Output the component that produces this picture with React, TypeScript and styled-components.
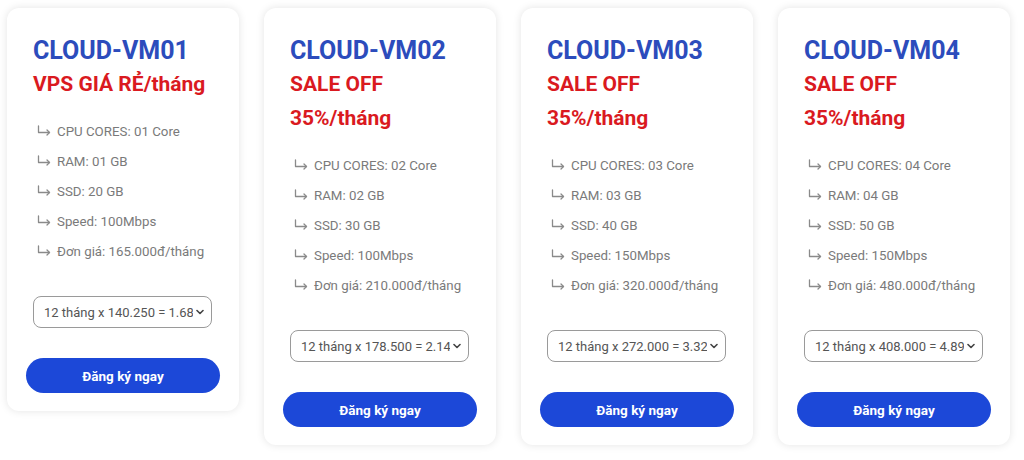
import React from "react";
import styled, { createGlobalStyle } from "styled-components";

const Global = createGlobalStyle`
  html, body { margin: 0; padding: 0; background: #ffffff; }
  body { font-family: Roboto, "Liberation Sans", Arial, sans-serif; }
  * { box-sizing: border-box; }
`;

const Row = styled.div`
  display: flex;
  align-items: flex-start;
  gap: 25px;
  padding: 8px 7px;
`;

const Card = styled.div`
  width: 232px;
  background: #ffffff;
  border-radius: 12px;
  box-shadow: 0 0 9px rgba(0, 0, 0, 0.11);
  padding: 26px 19px 18px;
  display: flex;
  flex-direction: column;
`;

const Heading = styled.div`
  padding-left: 7px;
`;

const Title = styled.div`
  font-size: 25px;
  font-weight: 700;
  line-height: 34px;
  color: #2c4cbc;
  white-space: nowrap;
`;

const Promo = styled.div`
  font-size: 21px;
  font-weight: 700;
  line-height: 34px;
  color: #da1a1f;
  white-space: nowrap;
  position: relative;
  top: -1px;
`;

const Features = styled.ul`
  list-style: none;
  margin: 14px 0 0;
  padding: 0 0 0 11px;
`;

const Feature = styled.li`
  display: flex;
  align-items: center;
  gap: 6px;
  height: 30px;
  font-size: 13.3px;
  color: #7a7a7a;
  white-space: nowrap;
`;

const Arrow = styled.svg`
  width: 14px;
  height: 11px;
  flex: none;
  margin-top: -2px;
`;

const SelectWrap = styled.div`
  position: relative;
  margin: 30px 0 0 7px;
  width: 179px;
  height: 32px;
`;

const Select = styled.select`
  appearance: none;
  -webkit-appearance: none;
  width: 100%;
  height: 100%;
  border: 1px solid #9a9a9a;
  border-radius: 8px;
  background: #ffffff;
  padding: 0 18px 0 10px;
  font-family: Roboto, "Liberation Sans", Arial, sans-serif;
  font-size: 13px;
  color: #555555;
  outline: none;
`;

const Chevron = styled.svg`
  position: absolute;
  right: 8px;
  top: 13px;
  width: 8px;
  height: 6px;
  pointer-events: none;
`;

const Button = styled.button`
  margin-top: 30px;
  width: 194px;
  height: 35px;
  border: none;
  border-radius: 18px;
  background: #1c48d8;
  color: #ffffff;
  font-family: Roboto, "Liberation Sans", Arial, sans-serif;
  font-size: 13.5px;
  font-weight: 700;
  cursor: pointer;
`;

type Plan = {
  name: string;
  promo: string[];
  cpu: string;
  ram: string;
  ssd: string;
  speed: string;
  price: string;
  option: string;
};

const plans: Plan[] = [
  { name: "CLOUD-VM01", promo: ["VPS GIÁ RẺ/tháng"], cpu: "01", ram: "01", ssd: "20", speed: "100", price: "165.000", option: "12 tháng x 140.250 = 1.683.000đ" },
  { name: "CLOUD-VM02", promo: ["SALE OFF", "35%/tháng"], cpu: "02", ram: "02", ssd: "30", speed: "100", price: "210.000", option: "12 tháng x 178.500 = 2.142.000đ" },
  { name: "CLOUD-VM03", promo: ["SALE OFF", "35%/tháng"], cpu: "03", ram: "03", ssd: "40", speed: "150", price: "320.000", option: "12 tháng x 272.000 = 3.326.000đ" },
  { name: "CLOUD-VM04", promo: ["SALE OFF", "35%/tháng"], cpu: "04", ram: "04", ssd: "50", speed: "150", price: "480.000", option: "12 tháng x 408.000 = 4.896.000đ" },
];

const HookArrow = () => (
  <Arrow viewBox="0 0 14 11" fill="none" stroke="#8a8a8a" strokeWidth="1.3" strokeLinecap="round" strokeLinejoin="round">
    <path d="M1.5 1 V7.5 H12.5" />
    <path d="M10 5 L12.5 7.5 L10 10" />
  </Arrow>
);

const PlanCard = ({ p }: { p: Plan }) => {
  const items = [
    `CPU CORES: ${p.cpu} Core`,
    `RAM: ${p.ram} GB`,
    `SSD: ${p.ssd} GB`,
    `Speed: ${p.speed}Mbps`,
    `Đơn giá: ${p.price}đ/tháng`,
  ];
  return (
    <Card>
      <Heading>
        <Title>{p.name}</Title>
        {p.promo.map((t) => (
          <Promo key={t}>{t}</Promo>
        ))}
      </Heading>
      <Features>
        {items.map((t) => (
          <Feature key={t}>
            <HookArrow />
            <span>{t}</span>
          </Feature>
        ))}
      </Features>
      <SelectWrap>
        <Select defaultValue={p.option}>
          <option>{p.option}</option>
        </Select>
        <Chevron viewBox="0 0 8 6" fill="none" stroke="#444" strokeWidth="1.6" strokeLinecap="round" strokeLinejoin="round">
          <path d="M1 1.5 L4 4.5 L7 1.5" />
        </Chevron>
      </SelectWrap>
      <Button>Đăng ký ngay</Button>
    </Card>
  );
};

export default function App() {
  return (
    <>
      <Global />
      <Row>
        {plans.map((p) => (
          <PlanCard key={p.name} p={p} />
        ))}
      </Row>
    </>
  );
}
